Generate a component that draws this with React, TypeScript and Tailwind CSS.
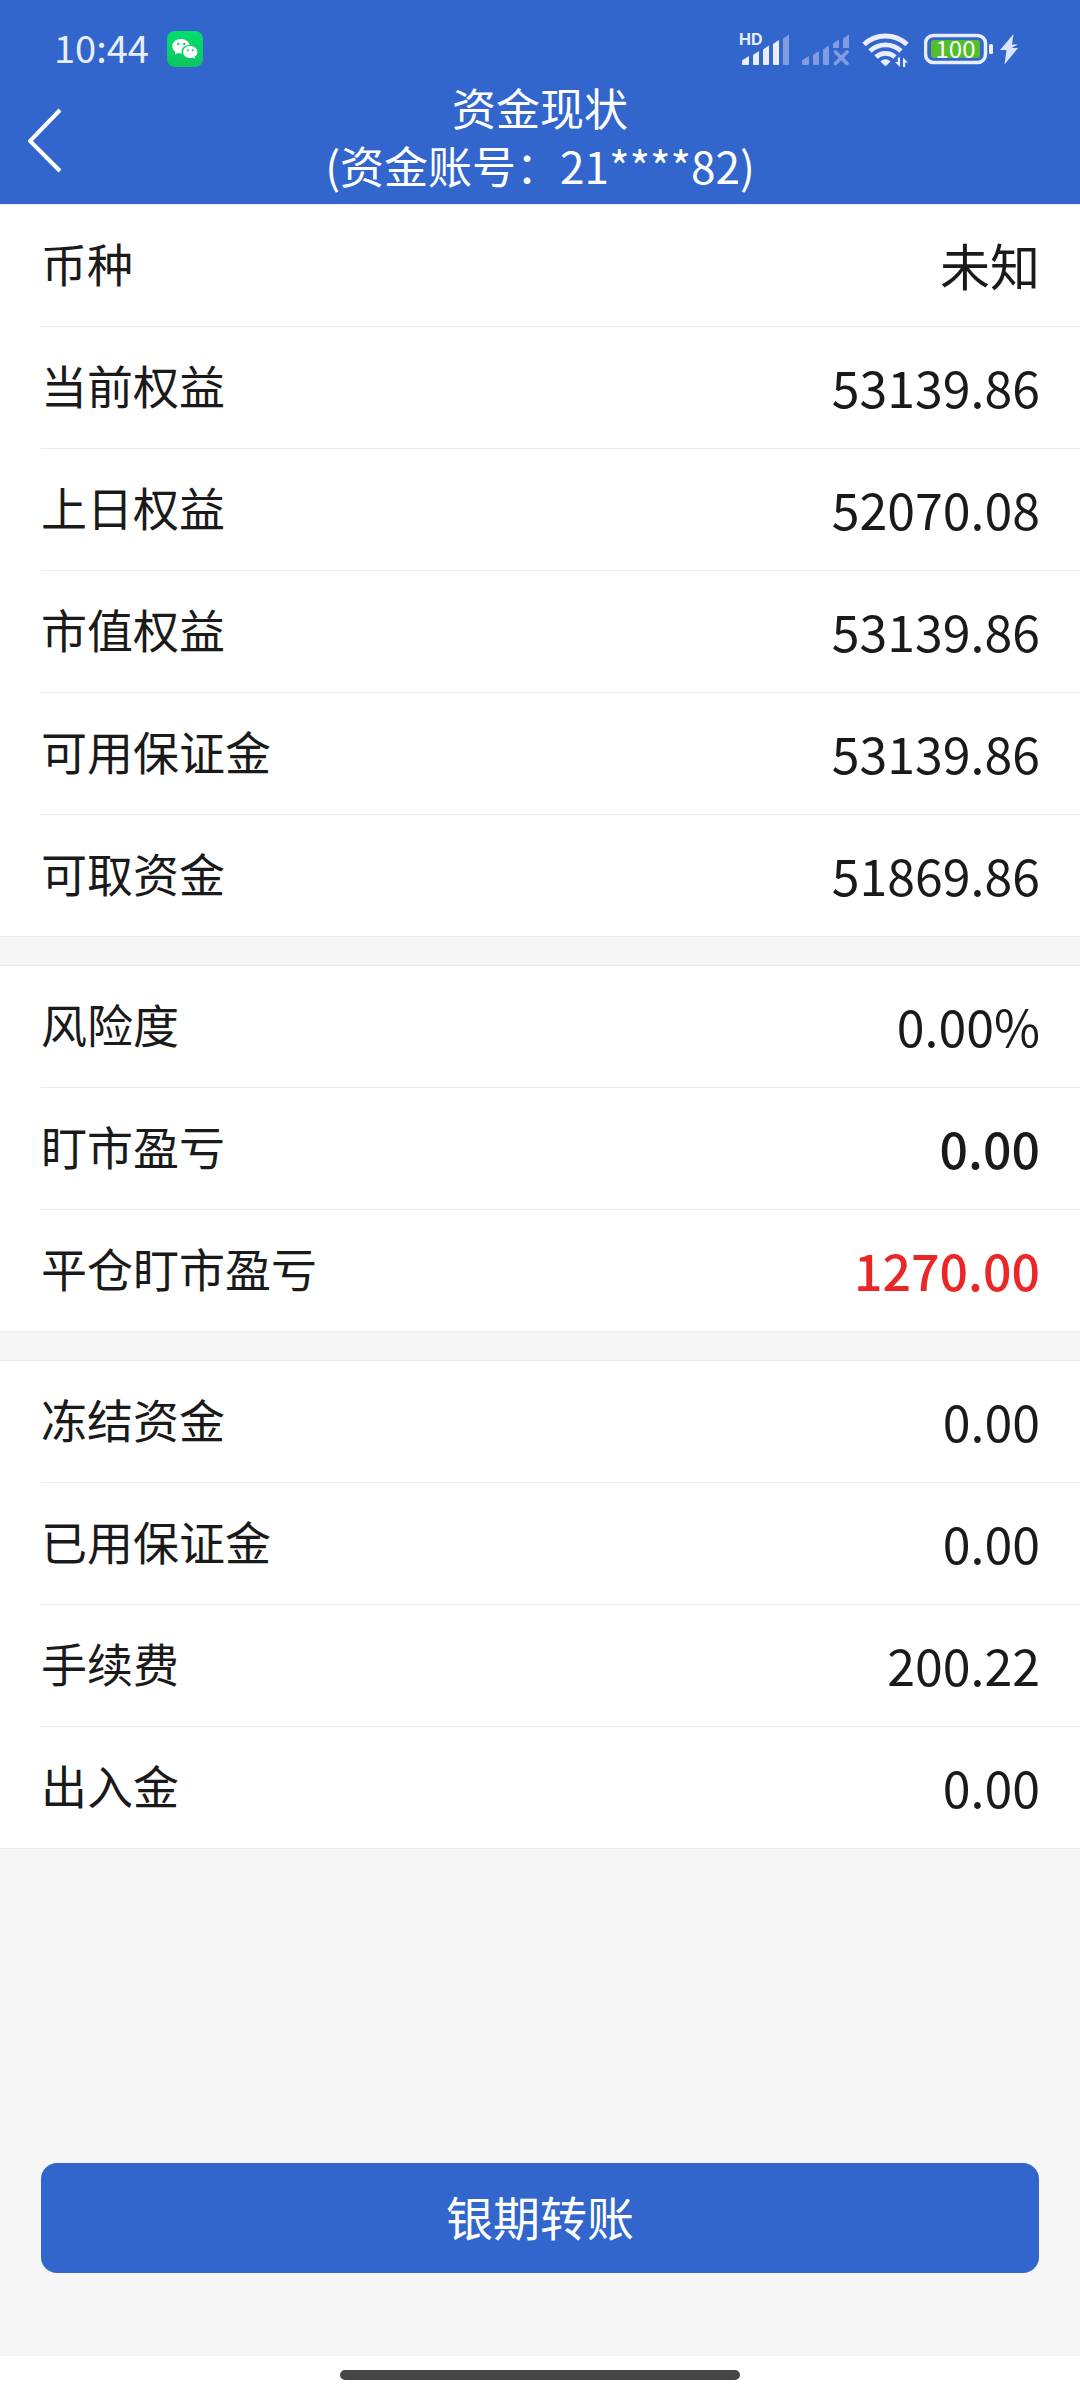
import { ReactNode } from 'react';

interface Row {
  label: string;
  value: string;
  tone?: 'strong' | 'rise';
}

const groups: Row[][] = [
  [
    { label: '币种', value: '未知' },
    { label: '当前权益', value: '53139.86' },
    { label: '上日权益', value: '52070.08' },
    { label: '市值权益', value: '53139.86' },
    { label: '可用保证金', value: '53139.86' },
    { label: '可取资金', value: '51869.86' }
  ],
  [
    { label: '风险度', value: '0.00%' },
    { label: '盯市盈亏', value: '0.00', tone: 'strong' },
    { label: '平仓盯市盈亏', value: '1270.00', tone: 'rise' }
  ],
  [
    { label: '冻结资金', value: '0.00' },
    { label: '已用保证金', value: '0.00' },
    { label: '手续费', value: '200.22' },
    { label: '出入金', value: '0.00' }
  ]
];

const tones = {
  normal: 'text-[#1a1a1a]',
  strong: 'text-[#1a1a1a] font-medium',
  rise: 'text-[#ea2626] font-medium'
};

function WechatBadge() {
  return (
    <svg className="w-9 h-9" viewBox="0 0 36 36" aria-hidden="true">
      <defs>
        <linearGradient id="wechat" x1="0" y1="0" x2="0" y2="1">
          <stop offset="0" stopColor="#04de6c" />
          <stop offset="1" stopColor="#0cc463" />
        </linearGradient>
      </defs>
      <rect width="36" height="36" rx="8" fill="url(#wechat)" />
      <path d="M14 8c-5 0-8.700 3.200-8.700 7.300 0 2.300 1.200 4.300 3.200 5.600l-.8 2.700 3.100-1.600c1 .3 2.100.4 3.200.4h.8c-.2-.6-.3-1.200-.3-1.800 0-3.800 3.600-6.600 8-6.600h.3C21.900 10.600 18.400 8 14 8z" fill="#fff" />
      <path d="M23.200 14.900c-4 0-7.200 2.700-7.200 6s3.200 6 7.200 6c.9 0 1.800-.1 2.600-.4l2.400 1.300-.6-2.200c1.700-1.100 2.800-2.800 2.800-4.700 0-3.300-3.200-6-7.200-6z" fill="#fff" />
      <circle cx="11.300" cy="13" r="1.200" fill="#0bcf67" />
      <circle cx="17.300" cy="13" r="1.200" fill="#0bcf67" />
      <circle cx="20.900" cy="19.300" r="1" fill="#0bcf67" />
      <circle cx="25.700" cy="19.300" r="1" fill="#0bcf67" />
    </svg>
  );
}

function SignalHd() {
  return (
    <svg className="w-[54px] h-10" viewBox="-4 -2 54 40" fill="#e8eefc" aria-hidden="true">
      <text x="-1" y="14" fontSize="16" fontWeight="700" fontFamily="Inter, sans-serif">HD</text>
      <path d="M2 29.500l7-4.500v8a1 1 0 0 1-1 1H3a1 1 0 0 1-1-1z" />
      <path d="M13 24l6-4v13a1 1 0 0 1-1 1h-4a1 1 0 0 1-1-1z" />
      <path d="M23 18.500l6-4V33a1 1 0 0 1-1 1h-4a1 1 0 0 1-1-1z" />
      <path d="M33 13l6-4v24a1 1 0 0 1-1 1h-4a1 1 0 0 1-1-1z" />
      <path d="M43 7.500l6-4V33a1 1 0 0 1-1 1h-4a1 1 0 0 1-1-1z" fill="#7f9de0" />
    </svg>
  );
}

function SignalOff() {
  return (
    <svg className="w-12 h-9" viewBox="0 0 48 36" fill="#7f9de0" aria-hidden="true">
      <path d="M0 29.500l7-4.500v8a1 1 0 0 1-1 1H1a1 1 0 0 1-1-1z" />
      <path d="M11 24l6-4v13a1 1 0 0 1-1 1h-4a1 1 0 0 1-1-1z" />
      <path d="M21 18.500l6-4V33a1 1 0 0 1-1 1h-4a1 1 0 0 1-1-1z" />
      <path d="M31 12.500l6-4V17h-6z" />
      <path d="M41 7.500l6-4V17h-6z" />
      <path d="M33.500 21L45 32.500M45 21L33.500 32.500" stroke="#7f9de0" strokeWidth="3.800" strokeLinecap="round" />
    </svg>
  );
}

function Wifi() {
  return (
    <svg className="w-[47px] h-9" viewBox="0 0 47 36" fill="none" stroke="#e8eefc" strokeWidth="4.800" aria-hidden="true">
      <path d="M2 13.500a31.500 31.500 0 0 1 43 0" />
      <path d="M8 20a22.500 22.500 0 0 1 31 0" />
      <path d="M14 26a14 14 0 0 1 19 0" />
      <path d="M18.500 30.500c3-3 7-3 10 0l-4 4q-1 .8-2 0z" fill="#e8eefc" stroke="none" />
      <path d="M38 26.500v9.500l-5-5h2.800v-4.500zM41 36v-9.500l5 5h-2.800V36z" fill="#e8eefc" stroke="none" />
    </svg>
  );
}

function Battery() {
  return (
    <svg className="w-[70px] h-9" viewBox="0 0 70 36" aria-hidden="true">
      <rect x="1.500" y="4.500" width="60" height="27" rx="8" fill="none" stroke="#e8eefc" strokeWidth="3.500" />
      <rect x="7" y="9" width="49" height="18" rx="3" fill="#54bd2b" />
      <rect x="65" y="13" width="4" height="10" rx="1.500" fill="#e8eefc" />
      <text x="31.500" y="27" fontSize="24" textAnchor="middle" fill="#fff" fontFamily="'Noto Sans CJK SC', sans-serif">100</text>
    </svg>
  );
}

function Bolt() {
  return (
    <svg className="w-[19px] h-9" viewBox="0 0 19 36" fill="#dbe5fa" aria-hidden="true">
      <path d="M13.500 3L0 19h6.500L4.500 33.500 18 17h-6.500L18 13.500h-6z" />
    </svg>
  );
}

function StatusBar() {
  return (
    <div className="h-[78px] pt-5 pl-[54px] pr-[61px] flex items-center justify-between">
      <div className="flex items-center gap-[18px]">
        <span className="pb-1 text-[38px] leading-none text-[#e8eefc]">10:44</span>
        <WechatBadge />
      </div>
      <div className="flex items-center">
        <SignalHd />
        <span className="w-3" />
        <SignalOff />
        <span className="w-3" />
        <Wifi />
        <span className="w-[15px]" />
        <Battery />
        <span className="w-[6px]" />
        <Bolt />
      </div>
    </div>
  );
}

function Group({ children }: { children: ReactNode }) {
  return <dl className="bg-white border-y border-[#ececec]">{children}</dl>;
}

export default function App() {
  return (
    <div className="min-h-screen flex flex-col bg-[#f6f6f6] font-['Noto_Sans_CJK_SC',sans-serif]">
      <header className="bg-[#3266cc] text-white">
        <StatusBar />
        <div className="grid grid-cols-[88px_1fr_88px] items-center">
          <button type="button" aria-label="返回" className="pl-7 py-7">
            <svg className="w-[34px] h-[66px]" viewBox="0 0 34 66" fill="none" stroke="currentColor" strokeWidth="4" aria-hidden="true">
              <path d="M32 2L2 33l30 30" />
            </svg>
          </button>
          <h1 className="pb-[10px] text-center text-[44px] leading-[58px] font-normal">
            资金现状
            <br />
            (资金账号：21****82)
          </h1>
        </div>
      </header>

      <main className="flex-1 flex flex-col">
        <div className="flex flex-col gap-7">
          {groups.map((rows, i) => (
            <Group key={i}>
              {rows.map((row) => (
                <div
                  key={row.label}
                  className="h-[122px] ml-[41px] pr-10 flex items-center justify-between border-b border-[#ececec] last:h-[121px] last:border-b-0"
                >
                  <dt className="pb-2 text-[46px] leading-none text-[#1a1a1a]">{row.label}</dt>
                  <dd className={`pb-1 text-[50px] leading-none ${tones[row.tone ?? 'normal']}`}>{row.value}</dd>
                </div>
              ))}
            </Group>
          ))}
        </div>

        <div className="mt-auto px-[41px] pb-[83px]">
          <button type="button" className="w-full h-[110px] pb-1 rounded-2xl bg-[#3266cc] text-white text-[47px]">
            银期转账
          </button>
        </div>
      </main>

      {/* Gesture bar */}
      <footer className="h-11 bg-white flex justify-center items-start pt-[14px]">
        <div className="w-[400px] h-[10px] rounded-full bg-[#464646]" />
      </footer>
    </div>
  );
}
